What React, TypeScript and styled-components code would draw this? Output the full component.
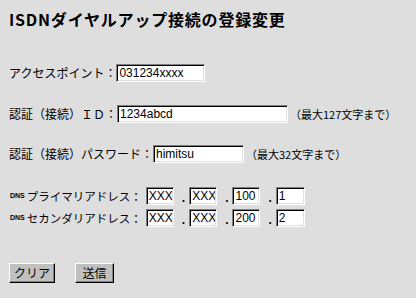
import React from "react";
import styled, { createGlobalStyle } from "styled-components";

const Global = createGlobalStyle`
  html, body { margin: 0; padding: 0; background: #dedede; }
  body { font-family: "Noto Sans CJK JP", sans-serif; color: #000; }
`;

const Page = styled.div`
  width: 416px;
  height: 298px;
  box-sizing: border-box;
  padding: 8px 0 0 9px;
  background: #dedede;
`;

const Title = styled.h1`
  margin: 0;
  font-family: "Noto Sans CJK JP", sans-serif;
  font-size: 16px;
  font-weight: bold;
  line-height: 22px;
  letter-spacing: 0.8px;
  white-space: nowrap;
`;

const Form = styled.form`
  display: flex;
  flex-direction: column;
  margin: 0;
`;

const Row = styled.div<{ $mt: number; $h?: number }>`
  display: flex;
  align-items: center;
  height: ${(p) => p.$h ?? 18}px;
  margin-top: ${(p) => p.$mt}px;
  font-size: 12px;
  line-height: 14px;
  white-space: nowrap;
`;

const Label = styled.span<{ $gap?: number; $size?: number }>`
  font-family: "Noto Sans CJK JP", sans-serif;
  font-size: ${(p) => p.$size ?? 12}px;
  margin-right: ${(p) => p.$gap ?? 0}px;
`;

const Small = styled.span`
  font-family: "Liberation Sans", sans-serif;
  font-size: 7px;
  font-weight: bold;
  margin: 0 2px 0 1px;
`;

const Field = styled.input<{ $w: number; $h?: number }>`
  box-sizing: border-box;
  width: ${(p) => p.$w}px;
  height: ${(p) => p.$h ?? 18}px;
  margin: 0;
  padding: 0 1px 0 2px;
  background: #fff;
  border: 1px solid;
  border-color: #808080 #fff #fff #808080;
  box-shadow: inset 1px 1px 0 #000, inset -1px -1px 0 #dfdfdf;
  font-family: "Liberation Sans", sans-serif;
  font-size: 12px;
  color: #000;
  outline: none;
`;

const Note = styled.span`
  font-family: "Noto Sans CJK JP", sans-serif;
  font-size: 11px;
  margin-left: 2px;
`;

const Dot = styled.span`
  font-family: "Liberation Sans", sans-serif;
  font-size: 12px;
  font-weight: bold;
  margin: 0 4px 0 8px;
  align-self: flex-end;
  line-height: 14px;
`;

const Buttons = styled.div`
  display: flex;
  gap: 20px;
  margin-top: 36px;
`;

const Button = styled.button<{ $w: number }>`
  box-sizing: border-box;
  width: ${(p) => p.$w}px;
  height: 20px;
  margin: 0;
  padding: 0;
  background: #c0c0c0;
  border: 1px solid;
  border-color: #fff #000 #000 #fff;
  box-shadow: inset -1px -1px 0 #808080;
  font-family: "Noto Sans CJK JP", sans-serif;
  font-size: 12px;
  color: #000;
  line-height: 16px;
`;

const dns = [
  { label: "プライマリアドレス：", values: ["XXX", "XXX", "100", "1"], mt: 24 },
  { label: "セカンダリアドレス：", values: ["XXX", "XXX", "200", "2"], mt: 4 },
];

const widths = [28, 28, 28, 29];

export default function App() {
  return (
    <Page>
      <Global />
      <Title>ISDNダイヤルアップ接続の登録変更</Title>
      <Form onSubmit={(e) => e.preventDefault()}>
        <Row $mt={34}>
          <Label>アクセスポイント：</Label>
          <Field $w={89} defaultValue="031234xxxx" />
        </Row>
        <Row $mt={23}>
          <Label>認証（接続）ＩＤ：</Label>
          <Field $w={171} defaultValue="1234abcd" />
          <Note>（最大127文字まで）</Note>
        </Row>
        <Row $mt={22}>
          <Label>認証（接続）パスワード：</Label>
          <Field $w={91} defaultValue="himitsu" />
          <Note>（最大32文字まで）</Note>
        </Row>
        {dns.map((d) => (
          <Row key={d.label} $mt={d.mt} $h={18}>
            <Small>DNS</Small>
            <Label $gap={4} $size={11.5}>{d.label}</Label>
            {d.values.map((v, i) => (
              <React.Fragment key={i}>
                {i > 0 && <Dot>.</Dot>}
                <Field $w={widths[i]} $h={18} defaultValue={v} />
              </React.Fragment>
            ))}
          </Row>
        ))}
        <Buttons>
          <Button type="reset" $w={46}>クリア</Button>
          <Button type="submit" $w={39}>送信</Button>
        </Buttons>
      </Form>
    </Page>
  );
}
